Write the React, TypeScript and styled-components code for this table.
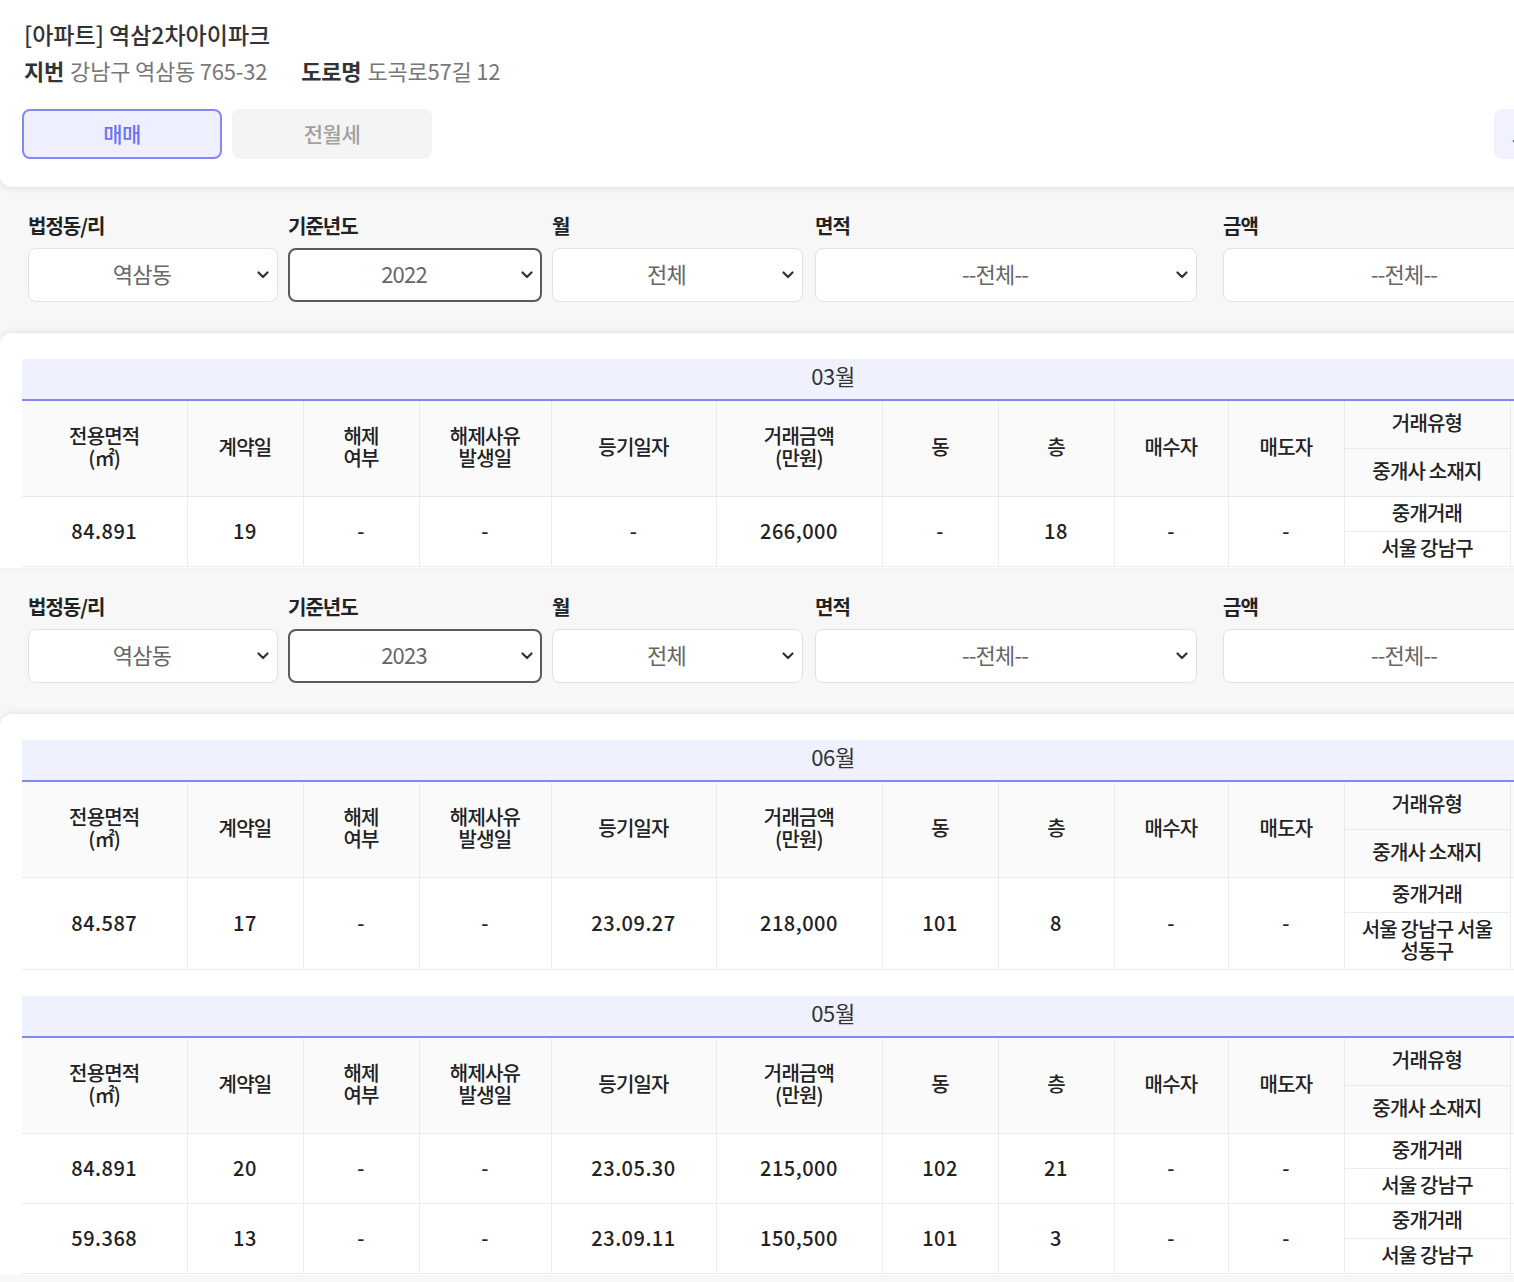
import React from "react";
import styled, { createGlobalStyle } from "styled-components";

const GlobalStyle = createGlobalStyle`
  html, body {
    margin: 0;
    padding: 0;
    overflow: hidden;
    background: #f7f7f7;
  }
  body {
    font-family: "Noto Sans CJK KR", "Noto Sans", sans-serif;
    color: #222;
  }
  * { box-sizing: border-box; }
`;

const Page = styled.div`
  width: 1666px;
  background: #f7f7f7;
`;

const HeaderCard = styled.header`
  background: #fff;
  height: 187px;
  padding: 19px 22px 27px 22px;
  border-radius: 0 0 12px 12px;
  box-shadow: 0 2px 6px rgba(0, 0, 0, 0.09);
  position: relative;
  z-index: 2;
`;

const Title = styled.h1`
  margin: 0;
  font-size: 23px;
  line-height: 30px;
  font-weight: 500;
  color: #333;
  letter-spacing: 0;
  padding-left: 2px;
`;

const AddressLine = styled.div`
  margin-top: 6px;
  display: flex;
  gap: 34px;
  font-size: 22px;
  line-height: 30px;
  letter-spacing: -0.2px;
  padding-left: 2px;
`;

const AddrItem = styled.span`
  color: #777;
  b {
    color: #333;
    font-weight: 700;
    margin-right: 6px;
  }
`;

const TabRow = styled.div`
  margin-top: 24px;
  display: flex;
  gap: 10px;
`;

const Tab = styled.button<{ $active?: boolean }>`
  width: 200px;
  height: 50px;
  border-radius: 8px;
  font-family: inherit;
  font-size: 21px;
  font-weight: 500;
  letter-spacing: -0.5px;
  padding: 0 0 3px 0;
  border: ${(p) => (p.$active ? "2px solid #8388f6" : "2px solid #f4f4f4")};
  background: ${(p) => (p.$active ? "#eff0ff" : "#f4f4f4")};
  color: ${(p) => (p.$active ? "#6c72f2" : "#a0a0a0")};
  cursor: pointer;
`;

const SideButton = styled.button`
  margin-left: auto;
  width: 150px;
  height: 50px;
  border-radius: 8px;
  border: none;
  background: #f2f2ff;
  font-family: inherit;
  font-size: 20px;
  font-weight: 700;
  color: #2f6fd6;
  text-align: left;
  padding-left: 18px;
`;

const FilterBar = styled.section`
  background: #f7f7f7;
  padding: 27px 28px 31px 28px;
  display: flex;
  gap: 10px;
`;

const Field = styled.div<{ $w: number; $ml?: number }>`
  width: ${(p) => p.$w}px;
  margin-left: ${(p) => p.$ml ?? 0}px;
  display: flex;
  flex-direction: column;
  gap: 10px;
`;

const Label = styled.label`
  font-size: 20px;
  line-height: 24px;
  font-weight: 700;
  color: #222;
  letter-spacing: -1px;
`;

const SelectBox = styled.div<{ $focus?: boolean }>`
  height: 54px;
  background: #fff;
  border-radius: 8px;
  border: ${(p) => (p.$focus ? "2px solid #5a5a5a" : "1px solid #e2e2e2")};
  display: flex;
  align-items: center;
  gap: 16px;
  padding: 0 ${(p) => (p.$focus ? 7 : 8)}px 0 ${(p) => (p.$focus ? 13 : 14)}px;
`;

const SelectText = styled.span`
  flex: 1;
  text-align: center;
  font-size: 22px;
  line-height: 28px;
  padding-bottom: 5px;
  color: #666;
  letter-spacing: -0.8px;
`;

const Chevron = () => (
  <svg width="12" height="8" viewBox="0 0 12 8" fill="none">
    <path d="M1.5 1.5 L6 6 L10.5 1.5" stroke="#333" strokeWidth="2.2" strokeLinecap="round" strokeLinejoin="round" />
  </svg>
);

const ResultsCard = styled.section`
  background: #fff;
  border-radius: 12px 12px 0 0;
  box-shadow: 0 -2px 6px rgba(0, 0, 0, 0.07);
  padding: 26px 0 1px 22px;
  display: flex;
  flex-direction: column;
  gap: 26px;
  position: relative;
  z-index: 1;
`;

const Table = styled.table`
  width: 1622px;
  table-layout: fixed;
  border-collapse: collapse;
  font-size: 20px;
  color: #222;
`;

const MonthCell = styled.th`
  background: #eff2fe;
  border-bottom: 2px solid #8188f4;
  font-size: 22px;
  font-weight: 400;
  line-height: 28px;
  padding: 2px 0 10px;
  color: #333;
  letter-spacing: -0.3px;
`;

const HeadCell = styled.th`
  background: #fafafa;
  font-weight: 500;
  line-height: 22px;
  padding: 11px 6px 14px;
  letter-spacing: -0.8px;
  border-left: 1px solid #e9e9e9;
  border-bottom: 1px solid #e9e9e9;
  white-space: pre-line;
  &:first-child { border-left: none; }
`;

const DataCell = styled.td<{ $text?: boolean }>`
  text-align: center;
  line-height: 22px;
  padding: 5px 8px 7px;
  border-left: 1px solid #ececec;
  border-bottom: 1px solid #ececec;
  font-weight: 500;
  letter-spacing: ${(p) => (p.$text ? "-0.8px" : "0.5px")};
  &:first-child { border-left: none; }
`;

const colWidths = [165, 116, 116, 132, 165, 166, 116, 116, 114, 116, 166, 134];
const headers = [
  "전용면적\n(㎡)",
  "계약일",
  "해제\n여부",
  "해제사유\n발생일",
  "등기일자",
  "거래금액\n(만원)",
  "동",
  "층",
  "매수자",
  "매도자",
];

type Row = {
  area: string;
  day: string;
  cancel: string;
  cancelDate: string;
  regDate: string;
  price: string;
  dong: string;
  floor: string;
  buyer: string;
  seller: string;
  type: string;
  agent: string;
};

const MonthTable = ({ month, rows }: { month: string; rows: Row[] }) => (
  <Table>
    <colgroup>
      {colWidths.map((w, i) => (
        <col key={i} style={{ width: w }} />
      ))}
    </colgroup>
    <thead>
      <tr>
        <MonthCell colSpan={12}>{month}</MonthCell>
      </tr>
      <tr>
        {headers.map((h) => (
          <HeadCell key={h} rowSpan={2}>
            {h}
          </HeadCell>
        ))}
        <HeadCell>거래유형</HeadCell>
        <HeadCell rowSpan={2}>비고</HeadCell>
      </tr>
      <tr>
        <HeadCell style={{ borderLeft: "1px solid #e9e9e9" }}>중개사 소재지</HeadCell>
      </tr>
    </thead>
    <tbody>
      {rows.map((r, i) => (
        <React.Fragment key={i}>
          <tr>
            <DataCell rowSpan={2}>{r.area}</DataCell>
            <DataCell rowSpan={2}>{r.day}</DataCell>
            <DataCell rowSpan={2}>{r.cancel}</DataCell>
            <DataCell rowSpan={2}>{r.cancelDate}</DataCell>
            <DataCell rowSpan={2}>{r.regDate}</DataCell>
            <DataCell rowSpan={2}>{r.price}</DataCell>
            <DataCell rowSpan={2}>{r.dong}</DataCell>
            <DataCell rowSpan={2}>{r.floor}</DataCell>
            <DataCell rowSpan={2}>{r.buyer}</DataCell>
            <DataCell rowSpan={2}>{r.seller}</DataCell>
            <DataCell $text>{r.type}</DataCell>
            <DataCell rowSpan={2}>-</DataCell>
          </tr>
          <tr>
            <DataCell $text style={{ borderLeft: "1px solid #ececec" }}>
              {r.agent}
            </DataCell>
          </tr>
        </React.Fragment>
      ))}
    </tbody>
  </Table>
);

const Filters = ({ year }: { year: string }) => (
  <FilterBar>
    <Field $w={250}>
      <Label>법정동/리</Label>
      <SelectBox>
        <SelectText>역삼동</SelectText>
        <Chevron />
      </SelectBox>
    </Field>
    <Field $w={254}>
      <Label>기준년도</Label>
      <SelectBox $focus>
        <SelectText>{year}</SelectText>
        <Chevron />
      </SelectBox>
    </Field>
    <Field $w={251}>
      <Label>월</Label>
      <SelectBox>
        <SelectText>전체</SelectText>
        <Chevron />
      </SelectBox>
    </Field>
    <Field $w={382} $ml={2}>
      <Label>면적</Label>
      <SelectBox>
        <SelectText>--전체--</SelectText>
        <Chevron />
      </SelectBox>
    </Field>
    <Field $w={384} $ml={16}>
      <Label>금액</Label>
      <SelectBox>
        <SelectText>--전체--</SelectText>
        <Chevron />
      </SelectBox>
    </Field>
  </FilterBar>
);

const base = { cancel: "-", cancelDate: "-", buyer: "-", seller: "-", type: "중개거래" };

const march: Row[] = [
  { ...base, area: "84.891", day: "19", regDate: "-", price: "266,000", dong: "-", floor: "18", agent: "서울 강남구" },
];
const june: Row[] = [
  { ...base, area: "84.587", day: "17", regDate: "23.09.27", price: "218,000", dong: "101", floor: "8", agent: "서울 강남구 서울 성동구" },
];
const may: Row[] = [
  { ...base, area: "84.891", day: "20", regDate: "23.05.30", price: "215,000", dong: "102", floor: "21", agent: "서울 강남구" },
  { ...base, area: "59.368", day: "13", regDate: "23.09.11", price: "150,500", dong: "101", floor: "3", agent: "서울 강남구" },
];

export default function App() {
  return (
    <Page>
      <GlobalStyle />
      <HeaderCard>
        <Title>[아파트] 역삼2차아이파크</Title>
        <AddressLine>
          <AddrItem>
            <b>지번</b>강남구 역삼동 765-32
          </AddrItem>
          <AddrItem>
            <b>도로명</b>도곡로57길 12
          </AddrItem>
        </AddressLine>
        <TabRow>
          <Tab $active>매매</Tab>
          <Tab>전월세</Tab>
          <SideButton>모아보기</SideButton>
        </TabRow>
      </HeaderCard>
      <Filters year="2022" />
      <ResultsCard>
        <MonthTable month="03월" rows={march} />
      </ResultsCard>
      <Filters year="2023" />
      <ResultsCard>
        <MonthTable month="06월" rows={june} />
        <MonthTable month="05월" rows={may} />
      </ResultsCard>
    </Page>
  );
}
